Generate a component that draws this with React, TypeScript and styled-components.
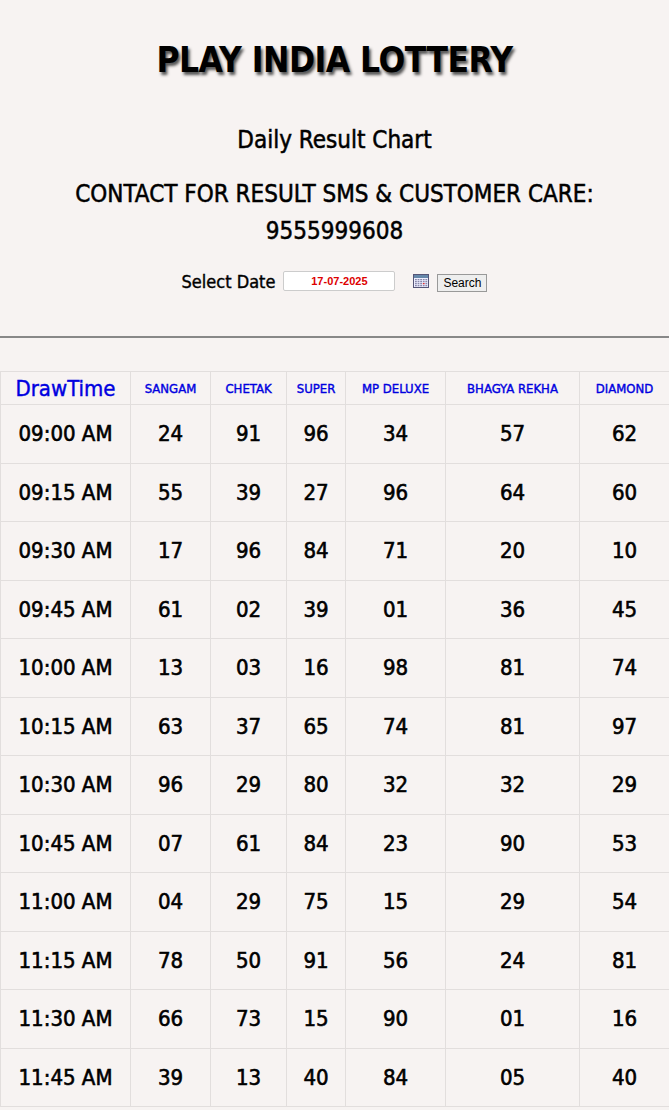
import * as React from "react";
import styled, { createGlobalStyle } from "styled-components";

const Global = createGlobalStyle`
  body { margin: 0; background: #f7f3f2; font-family: "DejaVu Sans Condensed", "DejaVu Sans", sans-serif; }
`;

const Header = styled.header`
  text-align: center;
  padding-top: 40px;
`;

const Title = styled.h1`
  margin: 0;
  font-size: 35px;
  font-weight: bold;
  color: #000;
  text-shadow: 2px 3px 3px #555;
  letter-spacing: -0.5px;
`;

const Sub = styled.h2`
  margin: 46px 0 0;
  font-size: 24px;
  font-weight: normal;
  -webkit-text-stroke: 0.5px #000;
`;

const Contact = styled.h3`
  margin: 22px 20px 0;
  font-size: 24px;
  line-height: 37px;
  font-weight: normal;
  -webkit-text-stroke: 0.5px #000;
`;

const DateRow = styled.div`
  display: flex;
  justify-content: center;
  align-items: center;
  gap: 8px;
  margin-top: 20px;
  font-size: 18px;
  -webkit-text-stroke: 0.4px #000;
`;

const DateInput = styled.div`
  width: 110px;
  height: 18px;
  background: #fff;
  border: 1px solid #ccc;
  border-radius: 2px;
  color: #d00;
  font-size: 11px;
  font-weight: bold;
  font-family: "Liberation Sans", Arial, sans-serif;
  display: flex;
  align-items: center;
  justify-content: center;
  -webkit-text-stroke: 0;
  margin-right: 10px;
`;

const SearchBtn = styled.button`
  font-family: "Liberation Sans", Arial, sans-serif;
  font-size: 12px;
  padding: 1px 5px;
  border: 1px solid #999;
  background: #eee;
  margin-top: 4px;
  -webkit-text-stroke: 0;
`;

const Rule = styled.hr`
  margin: 44px 0 0;
  border: 0;
  border-top: 2px solid #888;
`;

const Table = styled.table`
  margin-top: 33px;
  width: 669px;
  border-collapse: collapse;
  table-layout: fixed;
`;

const Th = styled.th<{ $big?: boolean }>`
  height: 32px;
  border: 1px solid #e2dedd;
  color: #0000e0;
  font-weight: normal;
  font-size: ${(p) => (p.$big ? "22px" : "13px")};
  -webkit-text-stroke: 0.4px #0000e0;
  padding: 0;
`;

const Td = styled.td`
  height: 57.5px;
  border: 1px solid #e2dedd;
  text-align: center;
  font-size: 22px;
  -webkit-text-stroke: 0.6px #000;
  padding: 0;
`;

const cols = ["SANGAM", "CHETAK", "SUPER", "MP DELUXE", "BHAGYA REKHA", "DIAMOND"];
const widths = [130, 80, 76, 59, 100, 134, 90];
const rows: [string, string[]][] = [
  ["09:00 AM", ["24", "91", "96", "34", "57", "62"]],
  ["09:15 AM", ["55", "39", "27", "96", "64", "60"]],
  ["09:30 AM", ["17", "96", "84", "71", "20", "10"]],
  ["09:45 AM", ["61", "02", "39", "01", "36", "45"]],
  ["10:00 AM", ["13", "03", "16", "98", "81", "74"]],
  ["10:15 AM", ["63", "37", "65", "74", "81", "97"]],
  ["10:30 AM", ["96", "29", "80", "32", "32", "29"]],
  ["10:45 AM", ["07", "61", "84", "23", "90", "53"]],
  ["11:00 AM", ["04", "29", "75", "15", "29", "54"]],
  ["11:15 AM", ["78", "50", "91", "56", "24", "81"]],
  ["11:30 AM", ["66", "73", "15", "90", "01", "16"]],
  ["11:45 AM", ["39", "13", "40", "84", "05", "40"]],
];

const CalendarIcon = () => (
  <svg width="16" height="14" viewBox="0 0 16 14">
    <rect x="0.5" y="0.5" width="15" height="13" fill="#eef" stroke="#557" />
    <rect x="1" y="1" width="14" height="3" fill="#68a" />
    {[0, 1, 2, 3].map((r) =>
      [0, 1, 2, 3, 4].map((c) => (
        <rect key={`${r}${c}`} x={2 + c * 2.6} y={5 + r * 2} width="1.8" height="1.3" fill={r === 2 && c === 3 ? "#d33" : "#88a"} />
      ))
    )}
  </svg>
);

export default function App() {
  return (
    <>
      <Global />
      <Header>
        <Title>PLAY INDIA LOTTERY</Title>
        <Sub>Daily Result Chart</Sub>
        <Contact>
          CONTACT FOR RESULT SMS &amp; CUSTOMER CARE:
          <br />
          9555999608
        </Contact>
        <DateRow>
          Select Date
          <DateInput>17-07-2025</DateInput>
          <CalendarIcon />
          <SearchBtn>Search</SearchBtn>
        </DateRow>
      </Header>
      <Rule />
      <Table>
        <colgroup>
          {widths.map((w, i) => (
            <col key={i} style={{ width: w }} />
          ))}
        </colgroup>
        <thead>
          <tr>
            <Th $big>DrawTime</Th>
            {cols.map((c) => (
              <Th key={c}>{c}</Th>
            ))}
          </tr>
        </thead>
        <tbody>
          {rows.map(([t, v]) => (
            <tr key={t}>
              <Td>{t}</Td>
              {v.map((n, i) => (
                <Td key={i}>{n}</Td>
              ))}
            </tr>
          ))}
        </tbody>
      </Table>
    </>
  );
}
